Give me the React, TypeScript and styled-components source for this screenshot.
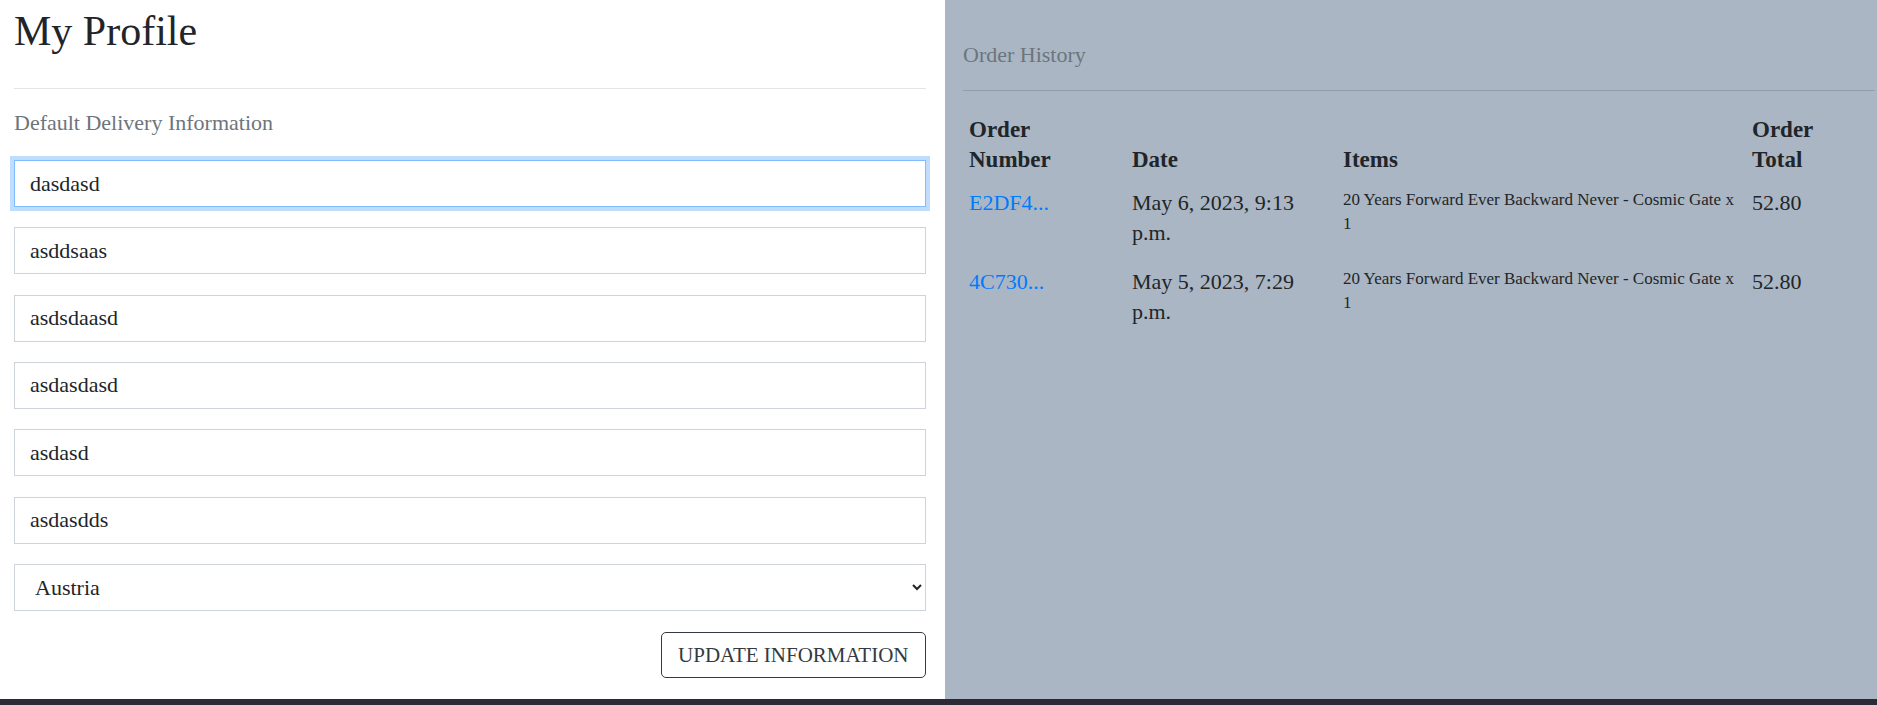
import React from "react";
import styled, { createGlobalStyle, css } from "styled-components";

const GlobalStyle = createGlobalStyle`
  html, body {
    margin: 0;
    padding: 0;
  }
  body {
    font-family: "Liberation Serif", "Times New Roman", serif;
    color: #212529;
    background: #ffffff;
  }
  * { box-sizing: border-box; }
`;

const Page = styled.div`
  display: flex;
  flex-direction: column;
  height: 705px;
`;

const Main = styled.main`
  display: grid;
  grid-template-columns: 945px 1fr;
  height: 699px;
`;

const ProfileColumn = styled.section`
  background: #ffffff;
  padding: 6px 19px 0 14px;
  display: flex;
  flex-direction: column;
`;

const HistoryColumn = styled.section`
  background: #aab6c3;
  padding: 40px 2px 0 18px;
  display: flex;
  flex-direction: column;
`;

const Title = styled.h1`
  margin: 0;
  font-size: 42px;
  line-height: 50px;
  font-weight: 400;
  color: #212529;
`;

const Rule = styled.hr<{ $onTint?: boolean; $top: number; $bottom: number }>`
  margin: ${(p) => p.$top}px 0 ${(p) => p.$bottom}px;
  height: 0;
  border: 0;
  border-top: 1px solid
    ${(p) => (p.$onTint ? "rgba(0, 0, 0, 0.13)" : "rgba(0, 0, 0, 0.1)")};
`;

const SectionLabel = styled.h6`
  margin: 0;
  font-size: 22px;
  line-height: 30px;
  font-weight: 400;
  color: #6c757d;
`;

const Form = styled.form`
  margin-top: 22px;
  display: flex;
  flex-direction: column;
  gap: 20.33px;
`;

const fieldBase = css`
  display: block;
  width: 100%;
  height: 47px;
  margin: 0;
  font-family: "Liberation Serif", "Times New Roman", serif;
  font-size: 22px;
  color: #212529;
  background: #ffffff;
  border: 1px solid #ced4da;
  border-radius: 0;
  outline: none;
`;

const TextField = styled.input<{ $focused?: boolean }>`
  ${fieldBase};
  padding: 0 15px;
  ${(p) =>
    p.$focused &&
    css`
      border-color: #80bdff;
      box-shadow: 0 0 0 4px rgba(0, 123, 255, 0.25);
    `}
`;

const SelectField = styled.select`
  ${fieldBase};
  padding: 0 11px 0 16px;
`;

const Actions = styled.div`
  display: flex;
  justify-content: flex-end;
  margin-top: 1px;
`;

const OutlineButton = styled.button`
  height: 46px;
  padding: 0 16.5px;
  font-family: "Liberation Serif", "Times New Roman", serif;
  font-size: 21px;
  color: #343a40;
  background: transparent;
  border: 1px solid #343a40;
  border-radius: 5px;
  cursor: pointer;
`;

const OrdersTable = styled.table`
  width: 100%;
  table-layout: fixed;
  border-collapse: collapse;
  color: #212529;
`;

const HeadCell = styled.th`
  padding: 6px 16px 7px 6px;
  text-align: left;
  vertical-align: bottom;
  font-size: 23px;
  line-height: 30px;
  font-weight: 700;
`;

const Cell = styled.td<{ $small?: boolean }>`
  padding: 6px 6px 13px;
  vertical-align: top;
  font-size: ${(p) => (p.$small ? "17px" : "22px")};
  line-height: ${(p) => (p.$small ? "24px" : "30px")};
`;

const OrderLink = styled.a`
  color: #007bff;
  text-decoration: none;
`;

const Footer = styled.footer`
  height: 6px;
  background: #2d2a35;
`;

type Order = {
  number: string;
  date: string;
  items: string;
  total: string;
};

const orders: Order[] = [
  {
    number: "E2DF4...",
    date: "May 6, 2023, 9:13 p.m.",
    items: "20 Years Forward Ever Backward Never - Cosmic Gate x 1",
    total: "52.80",
  },
  {
    number: "4C730...",
    date: "May 5, 2023, 7:29 p.m.",
    items: "20 Years Forward Ever Backward Never - Cosmic Gate x 1",
    total: "52.80",
  },
];

const fields = ["dasdasd", "asddsaas", "asdsdaasd", "asdasdasd", "asdasd", "asdasdds"];

export default function App() {
  return (
    <Page>
      <GlobalStyle />
      <Main>
        <ProfileColumn>
          <Title>My Profile</Title>
          <Rule $top={32} $bottom={19} />
          <SectionLabel>Default Delivery Information</SectionLabel>
          <Form onSubmit={(e) => e.preventDefault()}>
            {fields.map((v, i) => (
              <TextField key={i} type="text" defaultValue={v} $focused={i === 0} />
            ))}
            <SelectField defaultValue="AT">
              <option value="AT">Austria</option>
              <option value="BE">Belgium</option>
              <option value="DE">Germany</option>
            </SelectField>
            <Actions>
              <OutlineButton type="submit">UPDATE INFORMATION</OutlineButton>
            </Actions>
          </Form>
        </ProfileColumn>
        <HistoryColumn>
          <SectionLabel>Order History</SectionLabel>
          <Rule $onTint $top={20} $bottom={18} />
          <OrdersTable>
            <colgroup>
              <col style={{ width: 163 }} />
              <col style={{ width: 211 }} />
              <col style={{ width: 409 }} />
              <col style={{ width: 129 }} />
            </colgroup>
            <thead>
              <tr>
                <HeadCell>Order Number</HeadCell>
                <HeadCell>Date</HeadCell>
                <HeadCell>Items</HeadCell>
                <HeadCell>Order Total</HeadCell>
              </tr>
            </thead>
            <tbody>
              {orders.map((o) => (
                <tr key={o.number}>
                  <Cell>
                    <OrderLink href="#">{o.number}</OrderLink>
                  </Cell>
                  <Cell>{o.date}</Cell>
                  <Cell $small>{o.items}</Cell>
                  <Cell>{o.total}</Cell>
                </tr>
              ))}
            </tbody>
          </OrdersTable>
        </HistoryColumn>
      </Main>
      <Footer />
    </Page>
  );
}
